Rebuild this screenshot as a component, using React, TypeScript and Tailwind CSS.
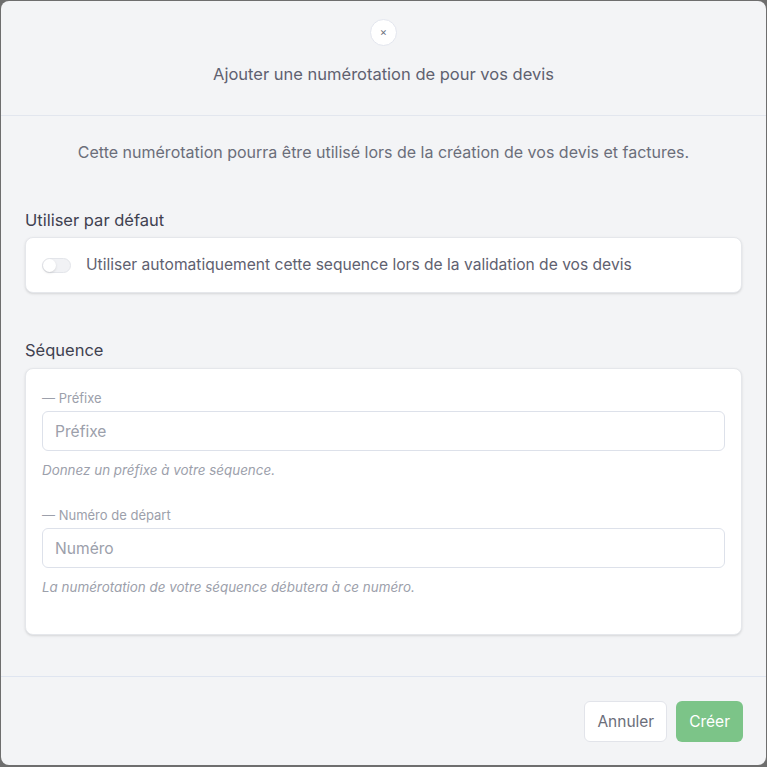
import React from "react";

export default function App() {
  return (
    <div className="w-[767px] h-[767px] bg-[#6e6e6e] pt-px pl-px" style={{ fontFamily: "Inter, 'Noto Sans', sans-serif" }}>
      <div className="w-[765px] h-[764px] bg-[#f3f4f6] rounded-lg flex flex-col overflow-hidden">
        {/* header */}
        <div className="h-[115px] shrink-0 flex flex-col items-center border-b border-[#e2e6ee]">
          <button className="mt-[18px] w-[27px] h-[27px] rounded-full bg-white border border-[#e3e6ee] flex items-center justify-center text-[#6b7280] text-[11px] leading-none">
            ×
          </button>
          <h2 className="mt-[16px] text-[16.5px] text-[#5f6170] leading-6">Ajouter une numérotation de pour vos devis</h2>
        </div>
        {/* body */}
        <div className="flex-1 px-6 pt-[26px]">
          <p className="text-center text-[16px] text-[#6b6e7a] leading-5">
            Cette numérotation pourra être utilisé lors de la création de vos devis et factures.
          </p>
          <h3 className="mt-[46px] text-[16.5px] text-[#3f4150] leading-6">Utiliser par défaut</h3>
          <div className="mt-[5px] h-[56px] bg-white rounded-lg border border-[#e5e7eb] shadow-sm flex items-center px-4">
            <div className="w-[29px] h-[15px] rounded-full bg-[#f1f2f5] border border-[#e3e5ea] relative">
              <div className="absolute left-0 top-0 w-[13px] h-[13px] rounded-full bg-white shadow-sm" />
            </div>
            <span className="ml-[15px] text-[15.6px] text-[#5f6170]">
              Utiliser automatiquement cette sequence lors de la validation de vos devis
            </span>
          </div>
          <h3 className="mt-[45px] text-[16.5px] text-[#3f4150] leading-6">Séquence</h3>
          <div className="mt-[6px] bg-white rounded-lg border border-[#e5e7eb] shadow-sm px-4 pt-[21px] pb-[39px]">
            <Field label="Préfixe" placeholder="Préfixe" help="Donnez un préfixe à votre séquence." />
            <div className="h-[29px]" />
            <Field label="Numéro de départ" placeholder="Numéro" help="La numérotation de votre séquence débutera à ce numéro." />
          </div>
        </div>
        {/* footer */}
        <div className="h-[89px] shrink-0 border-t border-[#dfe5f0] flex items-center justify-end px-[23px] gap-[9px] pt-[1px]">
          <button className="h-[41px] px-[12px] bg-white border border-[#e2e4ea] rounded-md text-[15.5px] text-[#6b6e7a]">Annuler</button>
          <button className="h-[41px] px-[13px] bg-[#7cc488] rounded-md text-[15.5px] text-white">Créer</button>
        </div>
      </div>
    </div>
  );
}

function Field({ label, placeholder, help }: { label: string; placeholder: string; help: string }) {
  return (
    <div>
      <div className="text-[13px] text-[#9ca0ab] leading-4">— {label}</div>
      <input
        className="mt-[5px] w-full h-[40px] rounded-md border border-[#dde1ea] px-3 text-[15.6px] placeholder:text-[#9ca0ab] outline-none"
        placeholder={placeholder}
      />
      <div className="mt-[11px] text-[13.4px] italic text-[#9ca0ab] leading-4">{help}</div>
    </div>
  );
}
